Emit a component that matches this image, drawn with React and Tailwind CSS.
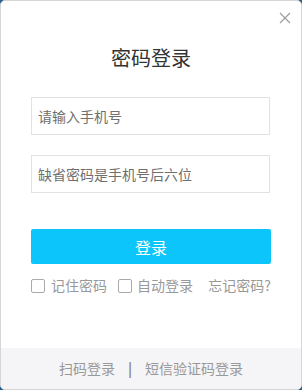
import React from 'react'

const font = { fontFamily: '"Microsoft YaHei", "Noto Sans CJK SC", "Noto Sans", sans-serif' }

export default function App() {
  return (
    <div className="h-[390px] w-[302px] bg-[#2a5d8a]" style={font}>
      <div className="flex h-full w-full flex-col overflow-hidden rounded-[5px] border border-[#d6d6d6] bg-white">
        {/* 关闭 */}
        <div className="flex justify-end pr-[10px] pt-[11px]">
          <svg width="12" height="12" viewBox="0 0 12 12" className="text-[#9a9a9a]">
            <path d="M1 1 L11 11 M11 1 L1 11" stroke="currentColor" strokeWidth="1.1" fill="none" />
          </svg>
        </div>

        <h1 className="mt-[21px] text-center text-[20px] leading-[26px] text-[#333]">密码登录</h1>

        <div className="mt-[26px] flex flex-col gap-[20px] pl-[30px] pr-[31px]">
          <input
            className="h-[38px] w-full border border-[#e2e2e2] px-[6px] text-[14px] text-[#333] outline-none placeholder:text-[#6f6f6f]"
            placeholder="请输入手机号"
          />
          <input
            className="h-[38px] w-full border border-[#e2e2e2] px-[6px] text-[14px] text-[#333] outline-none placeholder:text-[#6f6f6f]"
            placeholder="缺省密码是手机号后六位"
          />
        </div>

        <div className="mt-[36px] pl-[30px] pr-[30px]">
          <button className="h-[35px] w-full rounded-[2px] bg-[#0cc6fb] text-[16px] text-white">登录</button>
          <div className="mt-[11px] flex items-center text-[14px] text-[#999]">
            <span className="h-[14px] w-[14px] rounded-[2px] border border-[#aaa]" />
            <span className="ml-[6px]">记住密码</span>
            <span className="ml-[11px] h-[14px] w-[14px] rounded-[2px] border border-[#aaa]" />
            <span className="ml-[5px]">自动登录</span>
            <span className="ml-auto">忘记密码?</span>
          </div>
        </div>

        <div className="mt-auto flex h-[41px] items-center justify-center bg-[#f5f4f7] text-[14px] text-[#999]">
          <span>扫码登录</span>
          <span className="mx-[13px] font-bold text-[#888]">|</span>
          <span>短信验证码登录</span>
        </div>
      </div>
    </div>
  )
}
